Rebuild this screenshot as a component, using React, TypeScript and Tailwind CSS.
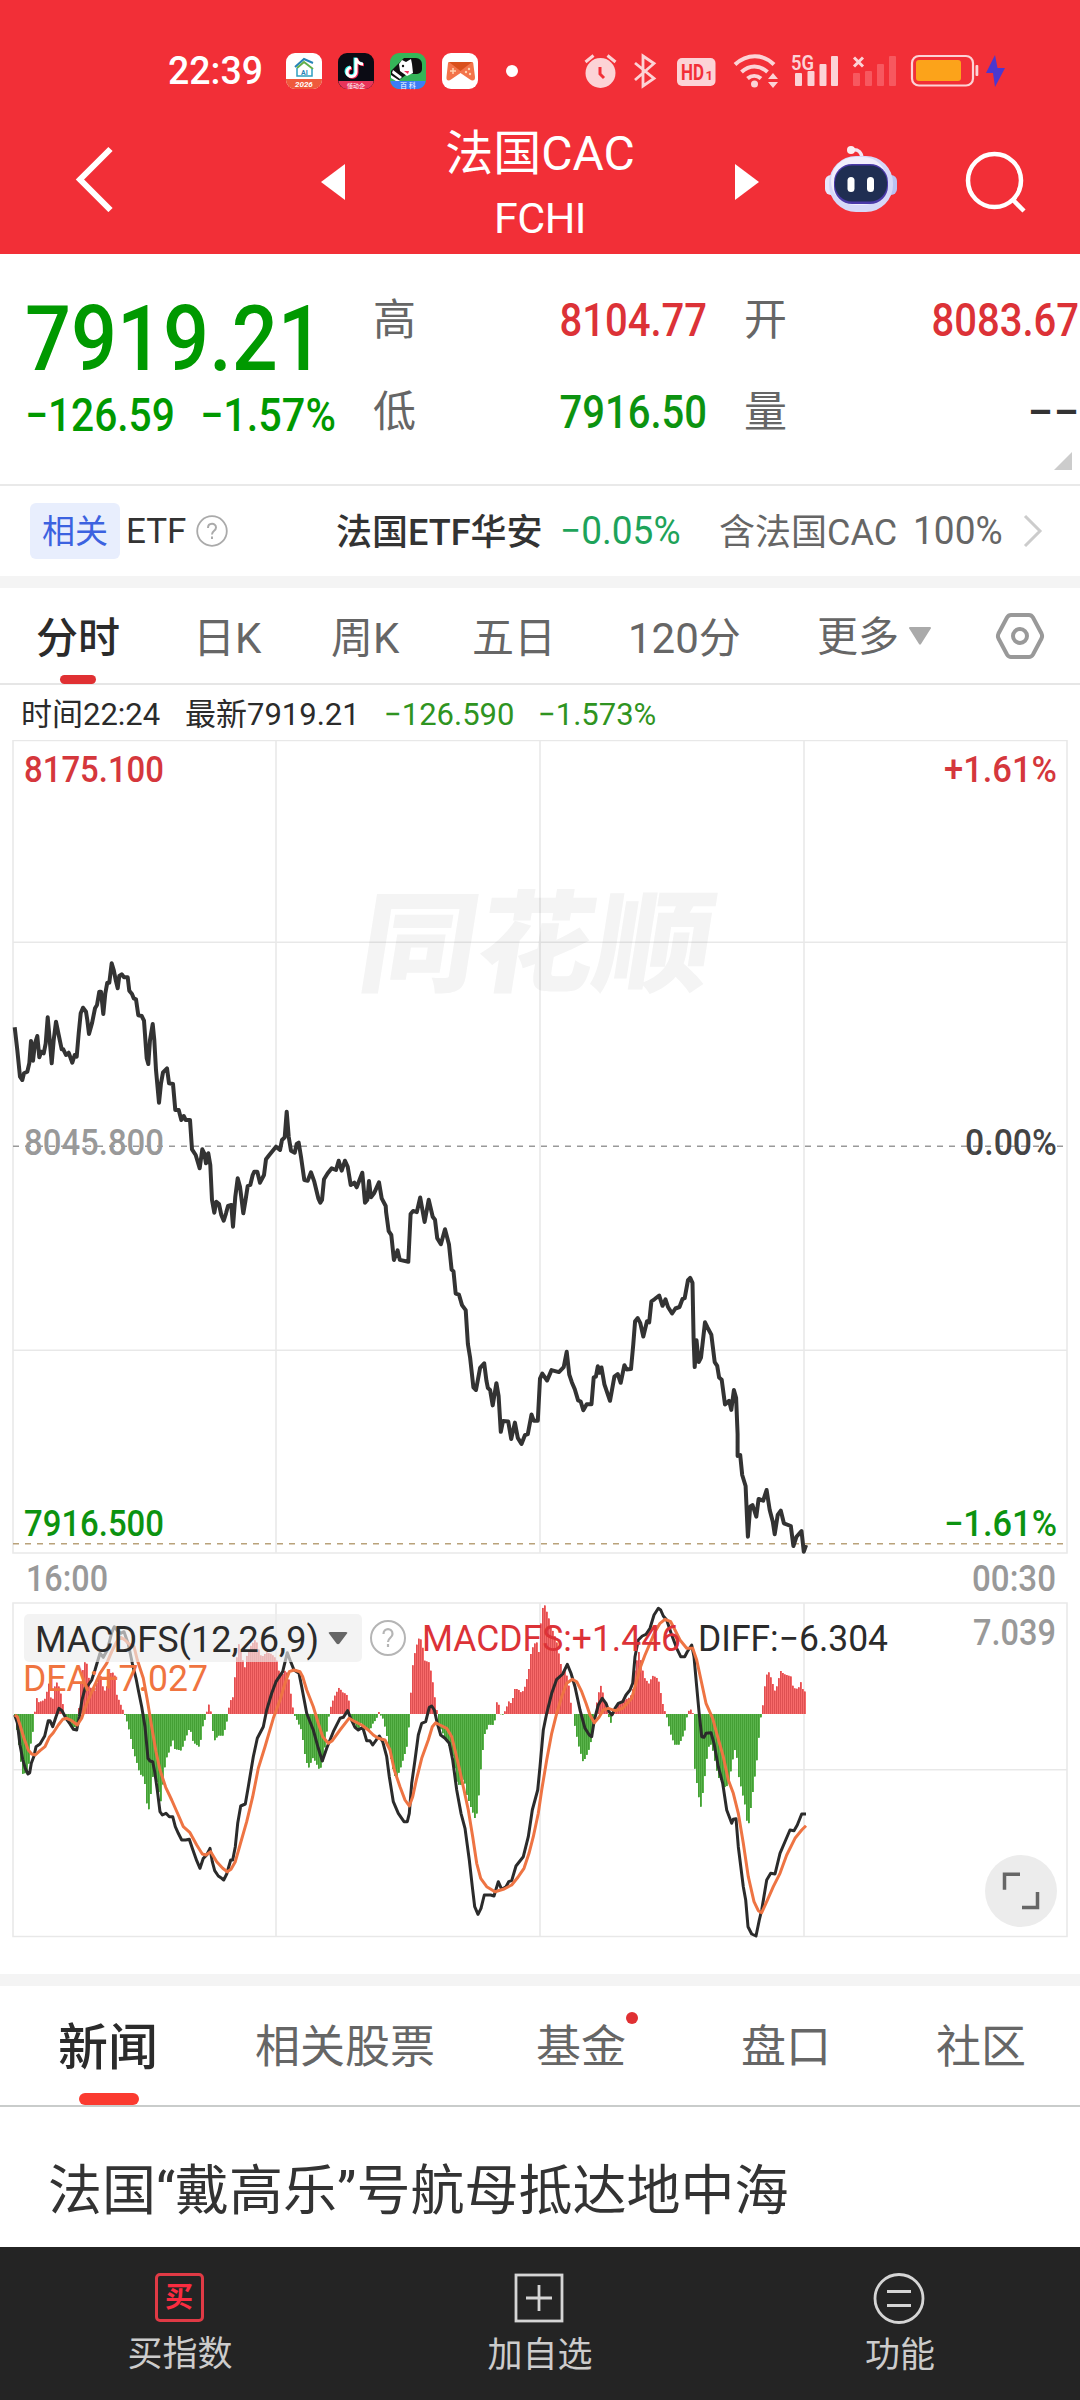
import type { ReactNode } from "react";

type Point = [number, number];

// turns "x,y x,y ..." into chart points, from a tile's own origin and scale
function trace(ox: number, oy: number, sx: number, sy: number, src: string): Point[] {
  return src
    .trim()
    .split(/\s+/)
    .map((p) => {
      const [x, y] = p.split(",").map(Number);
      return [ox + x / sx, oy + y / sy];
    });
}

const toPoints = (pts: Point[]) => pts.map(([x, y]) => `${x.toFixed(1)},${y.toFixed(1)}`).join(" ");

const price: Point[] = [
  ...trace(0, 740, 3, 3, `44,862 52,930 60,1010 67,1020 72,1000 82,995 88,970 93,903 99,962 105,910 112,888 118,952
    124,935 131,940 137,910 143,832 149,900 155,970 161,900 168,845 176,885 185,928 190,928 198,945 206,938 217,968
    224,945 230,950 236,880 242,820 249,803 258,815 262,840 267,882 276,850 285,805 291,795 298,755 303,755 310,822
    316,760 322,728 328,728 335,670 341,690 347,720 353,745 358,708 365,703 372,712 383,712 388,752 396,762 401,775
    408,778 415,826 425,828 432,842 440,955 445,972 450,900 458,852 463,900 468,990 477,1088 483,1030 489,997 501,985
    507,1030 519,1032 526,1110 536,1110 544,1140 551,1128 557,1140 570,1140 576,1228 587,1245 599,1285 607,1228
    613,1240 618,1270 625,1240 631,1275 636,1380 643,1418 649,1385 657,1392 664,1425 671,1442 678,1420 684,1398
    694,1395 699,1460 706,1370 713,1315 720,1340 730,1420 736,1385 743,1338 751,1335 758,1305 763,1295 772,1295
    780,1328 792,1305 798,1258 808,1245 828,1220 840,1230 846,1200 854,1192 860,1115 866,1190 873,1232 884,1238
    890,1212 896,1208 903,1250 913,1320 923,1322 933,1297 943,1325 955,1375 961,1388 966,1380 972,1318 983,1300
    995,1285 1008,1290 1016,1262 1025,1292 1035,1262 1043,1280 1052,1335 1063,1328 1070,1342 1087,1298 1095,1388
    1102,1380 1107,1323 1113,1372 1122,1360 1137,1327 1145,1375 1157,1398`),
  ...trace(240, 860, 2.703, 2.613, `395,920 402,970 409,980 416,1045 426,1020 432,1045 455,1050 461,925 468,917
    478,920 487,882 499,946 510,888 521,932 527,940 533,988 543,1004 554,965 565,1005 572,1070 577,1075 583,1133
    592,1136 600,1163 610,1176 616,1265 622,1300 631,1378 638,1385 649,1327 660,1315 666,1360 670,1380 676,1385
    683,1425 693,1367 699,1400 705,1494 711,1466 725,1467 733,1513 743,1470 751,1510 761,1526 770,1503 778,1500
    788,1449 794,1465 805,1465 811,1355 817,1342 830,1360 842,1333 862,1338 875,1325 883,1285 890,1345 897,1365
    905,1383 914,1412 921,1415 928,1438 937,1422 950,1422 956,1352 962,1350 967,1323 972,1340 977,1326 985,1370
    1000,1413 1012,1350 1021,1343 1029,1366 1039,1320 1045,1331 1057,1330 1063,1265 1068,1205 1075,1197 1082,1210
    1090,1245 1100,1205 1106,1208 1112,1153 1120,1148 1133,1138 1142,1165 1150,1148 1157,1168 1168,1185 1177,1172
    1188,1168 1196,1147 1202,1145 1211,1098 1217,1092 1223,1105 1226,1250 1229,1325 1234,1255 1240,1312 1246,1300
    1257,1208 1264,1222 1274,1240 1283,1312 1290,1322 1295,1352 1302,1358 1311,1423 1322,1413 1328,1437 1335,1385
    1341,1405 1345,1500`),
  ...trace(480, 1200, 2.613, 3, `673,768 680,765 685,825 694,858 698,960 700,1010 706,920 712,915 722,950 728,897
    740,902 749,870 757,930 765,965 770,1003 778,945 786,932 794,970 812,978 819,1038 827,1010 840,993 846,1055 852,1035`),
];

const diff: Point[] = [
  ...trace(0, 1500, 3, 3, `44,645 52,668 60,735 68,778 76,805 84,822 89,818 94,790 102,768 108,740 120,732 134,708
    145,662 150,662 158,680 168,650 177,625 186,632 198,655 210,672 220,688 230,690 238,650 246,600 255,565 265,555
    275,540 285,510 300,460 310,472 322,450 335,398 343,380 352,392 362,400 372,395 385,432 397,490 408,535 415,570
    425,620 435,680 444,775 450,783 458,785 464,815 472,870 480,935 487,945 498,940 508,950 518,950 526,980 535,1000
    545,1020 557,1020 568,1018 577,1045 590,1082 600,1105 610,1075 620,1065 630,1045 637,1085 644,1112 655,1128
    665,1135 671,1140 680,1122 692,1080 698,1080 706,1040 713,970 722,918 736,912 745,860 760,770 772,715 790,680
    800,630 815,580 828,545 848,515 862,458 870,480 882,510 897,520 905,560 920,640 940,690 955,745 967,783 980,745
    1000,695 1020,655 1030,652 1043,632 1052,655 1065,682 1075,690 1088,682 1100,722 1110,722 1118,735 1130,718
    1138,708 1148,725 1160,770 1168,830 1180,905 1195,940 1212,965`),
  ...trace(400, 1580, 3, 3, `22,725 28,700 35,610 45,540 55,465 65,430 77,425 88,382 95,378 103,390 112,430 122,465
    135,475 148,490 158,540 170,630 183,700 195,745 208,840 217,920 224,980 234,1003 243,985 253,945 272,945 282,948
    295,905 305,928 318,920 326,905 335,902 348,858 370,830 385,770 397,690 413,630 420,560 430,450 440,400 455,340
    470,298 488,282 502,253 513,280 525,320 540,390 555,445 568,465 575,470 583,420 595,375 607,355 618,370 627,395
    636,405 645,385 655,370 668,365 678,345 690,330 698,310 705,230 715,180 727,168 738,163 750,145 762,105 775,85
    782,90 790,108 800,120 815,165 830,205 842,230 854,230 862,215 875,195 882,230 890,320 897,395 905,470 912,472
    918,460 933,458 942,490 955,560 968,610 980,690 995,730 1000,718 1008,716 1015,800 1030,920 1037,960 1044,1040
    1055,1062 1068,1068 1078,1020 1085,990 1100,900 1112,880 1125,882 1140,820 1157,780 1170,750 1182,752 1192,735
    1205,702 1218,702`),
];

const dea: Point[] = [
  ...trace(0, 1500, 3, 3, `44,645 52,650 60,675 72,715 85,750 95,762 106,765 120,752 135,740 148,712 160,698 175,675
    188,658 200,655 215,662 232,675 245,655 255,625 265,600 280,565 300,520 320,490 335,455 350,425 362,412 375,420
    390,435 402,440 412,480 430,535 442,600 455,680 468,755 480,810 497,862 515,900 535,945 550,980 570,998 590,1035
    607,1062 618,1065 632,1055 650,1085 668,1105 682,1115 693,1108 706,1085 720,1035 740,965 758,890 775,805 795,740
    820,655 840,600 855,550 868,515 882,510 900,515 908,530 920,570 940,620 955,670 968,710 985,730 997,722 1020,690
    1047,655 1065,665 1085,675 1105,690 1120,705 1135,715 1155,720 1170,750 1183,810 1200,860 1215,900`),
  ...trace(400, 1580, 3, 3, `28,678 38,650 50,595 65,535 85,480 97,440 107,428 120,435 140,445 155,470 165,510
    178,565 192,630 205,690 218,770 230,850 242,895 260,920 285,935 310,928 335,915 355,890 372,865 387,820 400,770
    415,700 425,630 440,540 455,460 470,400 485,350 500,310 517,298 530,305 545,335 558,370 570,405 583,428 597,412
    610,390 625,385 645,392 668,385 695,355 705,320 720,265 735,225 750,190 765,155 780,130 795,118 812,125 825,150
    840,180 860,205 878,205 890,240 905,310 918,370 938,415 950,460 970,530 985,600 1000,640 1015,700 1030,790
    1045,890 1062,965 1075,992 1085,998 1100,965 1120,920 1140,880 1160,825 1185,775 1205,750 1218,737`),
];

// histogram heights, positive is above the zero line
const histogram: Point[] = [
  ...trace(0, 0, 3, 3, `44,-5 50,-40 60,-115 67,-180 85,-175 90,-110 97,-60 103,-40 104,0 107,20 110,50 116,35 134,42
    142,70 148,95 152,50 160,45 166,90 172,95 180,75 188,38 192,5 196,-5 205,-25 215,-40 222,-45 230,-30 236,0 240,70
    246,120 255,155 262,150 268,100 275,70 285,70 300,130 308,85 315,70 322,85 335,130 345,115 350,60 358,40 368,15
    374,0 378,-10 388,-50 400,-110 412,-150 420,-180 433,-190 440,-260 445,-300 452,-250 458,-190 465,-180 475,-220
    482,-270 488,-220 495,-160 502,-125 510,-110 518,-75 525,-105 545,-110 555,-80 570,-40 580,-85 600,-100 608,-40
    618,-8 620,0 623,20 628,30 632,15 634,0 638,-45 644,-80 655,-65 670,-65 680,-30 684,0 688,25 694,45 698,40
    704,100 712,180 718,215 725,175 735,140 742,180 750,200 760,215 768,225 778,190 785,170 800,185 815,180 830,165
    838,125 850,120 858,135 868,100 875,45 882,0 890,-15 905,-50 915,-120 925,-165 940,-130 950,-150 960,-170
    970,-140 980,-60 988,0 995,30 1005,55 1018,80 1028,65 1040,60 1047,40 1052,-10 1070,-40 1080,-45 1086,-10
    1090,-45 1110,-50 1118,-30 1130,-15 1136,8 1140,0 1150,-15 1160,-60 1170,-120 1180,-170 1188,-195 1200,-170
    1215,-120 1226,-80`),
  ...trace(400, 0, 3, 3, `28,0 32,50 40,160 50,205 60,235 68,205 75,160 88,155 97,110 107,35 113,0 115,-30 130,-60
    145,-90 160,-130 172,-210 182,-215 192,-190 200,-240 215,-285 228,-320 235,-270 245,-140 255,-60 268,-30 278,-35
    288,-12 290,30 294,50 298,20 300,0 310,-2 316,10 328,40 335,30 345,75 355,75 362,65 372,70 385,120 393,180
    402,210 412,215 418,180 424,290 432,335 440,310 455,260 470,220 480,165 488,125 498,130 508,80 515,15 519,0
    524,-30 535,-90 550,-145 560,-125 572,-95 578,-30 585,0 592,40 598,70 605,90 612,45 622,20 628,-15 632,-30
    638,-8 642,12 655,30 670,40 690,50 698,65 706,140 718,190 725,150 733,110 748,90 757,115 770,110 778,95 785,50
    792,15 799,0 803,-20 815,-70 825,-92 838,-92 850,-65 858,-40 862,0 870,15 878,10 880,-5 883,-150 890,-200
    902,-285 910,-230 918,-160 925,-100 935,-90 945,-140 955,-190 965,-200 978,-225 990,-190 1000,-130 1008,-95
    1015,-180 1028,-240 1037,-280 1044,-350 1052,-290 1062,-210 1070,-150 1078,-60 1084,0 1088,15 1093,70 1100,115
    1105,130 1113,110 1125,70 1132,85 1142,130 1152,120 1175,112 1180,78 1195,75 1204,98 1210,70 1218,66`),
];

function heightAt(x: number) {
  for (let i = 1; i < histogram.length; i++) {
    const [x0, h0] = histogram[i - 1];
    const [x1, h1] = histogram[i];
    if (x <= x1) return h0 + ((h1 - h0) * (x - x0)) / (x1 - x0);
  }
  return 0;
}

const ZERO = 1714;
const bars = Array.from({ length: 396 }, (_, i) => 14 + i * 2);

function StatusBar() {
  return (
    <svg className="block h-[110px] w-full" viewBox="0 0 1080 110">
      <text x="168" y="84" fontSize="38" fontWeight="500" fill="#fff" textLength="95" lengthAdjust="spacingAndGlyphs">22:39</text>

      <g>
        <rect x="286" y="53" width="36" height="36" rx="9" fill="#fff" />
        <path d="M286 79h36v1a9 9 0 0 1-9 9h-18a9 9 0 0 1-9-9z" fill="#ef5a3c" />
        <path d="M295 67l9-8 9 4" fill="none" stroke="#2684b8" strokeWidth="2" />
        <path d="M297 68l7-6 9 7" fill="none" stroke="#62b04a" strokeWidth="2" />
        <path d="M297 68v8h15v-7" fill="none" stroke="#2e9fc0" strokeWidth="1.5" />
        <text x="301" y="75" fontSize="7" fontWeight="700" fill="#2684b8">AI</text>
        <text x="295" y="87" fontSize="8" fontWeight="700" fontStyle="italic" fill="#fff">2026</text>
      </g>
      <g>
        <rect x="338" y="53" width="36" height="36" rx="9" fill="#0b0b14" />
        <path d="M338.500 81h35c0 4-4 8-8.500 8h-18c-4.500 0-8-4-8.500-8z" fill="#e8345a" />
        <g fill="none" strokeWidth="3">
          <path d="M356 58v14a4.500 4.500 0 1 1-5-4.500M356 58c.5 3 3 6 7 6" stroke="#25f4ee" transform="translate(-1 -.6)" />
          <path d="M356 58v14a4.500 4.500 0 1 1-5-4.500M356 58c.5 3 3 6 7 6" stroke="#fe2c55" transform="translate(1 .8)" />
          <path d="M356 58v14a4.500 4.500 0 1 1-5-4.500M356 58c.5 3 3 6 7 6" stroke="#fff" />
        </g>
        <text x="347" y="87.500" fontSize="6" fill="#fff">懂动企</text>
      </g>
      <g>
        <rect x="390" y="53" width="36" height="36" rx="9" fill="#35b558" />
        <path d="M404 58h12a6 6 0 0 1 6 6v5a5 5 0 0 1-5 5h-10l-9 7-7-4v-6l8-8z" fill="#111" />
        <path d="M399 64l3-4 4 2 5-3 1 5 1 9-6 3-7-5zM391 75l9 6h-4l-5-3zM393 70l9 7-2 2-8-6z" fill="#fff" />
        <circle cx="403" cy="66" r="1.200" fill="#111" />
        <path d="M404 71l5 0-1 3z" fill="#e8345a" />
        <path d="M390.500 81h35c0 4-4 8-8.500 8h-18c-4.500 0-8-4-8.500-8z" fill="#3b7df5" />
        <text x="400" y="87.500" fontSize="7" fill="#fff">百 科</text>
      </g>
      <g>
        <rect x="442" y="53" width="36" height="36" rx="9" fill="#fff" />
        <path d="M449 62h23q1 0 1.200 1l1.800 14c.4 4-3 4-5 2.500l-9.500-6.500-9.500 6.500c-2 1.500-5 1.500-4.500-2.500l1.500-14q.2-1 1-1z" fill="#f3744a" />
        <path d="M449 62h23l-11.500 9z" fill="#d9501c" />
        <path d="M453 68v6M450 71h6" stroke="#ffd2b0" strokeWidth="1.500" />
        <circle cx="466" cy="72" r="1.200" fill="#ffd2b0" />
        <circle cx="470" cy="74" r="1.200" fill="#ffd2b0" />
        <circle cx="469" cy="69" r="1.200" fill="#ffd2b0" />
      </g>
      <circle cx="512" cy="71" r="6" fill="#fff" />

      <g fill="#fcd3d6">
        <circle cx="600.500" cy="73" r="15" />
        <path d="M585.500 62l8-6.500M615.500 62l-8-6.500" stroke="#fcd3d6" strokeWidth="3" />
        <path d="M600 67v7l4 4" fill="none" stroke="#f22f37" strokeWidth="3" />
        <path d="M635 63l19 15.500-11 7.500V56l11 7.500L635 80" fill="none" stroke="#fcd3d6" strokeWidth="2.800" />
        <rect x="677" y="58" width="38.500" height="28" rx="5" />
        <text x="681" y="80" fontSize="22" fontWeight="700" fill="#f22f37" textLength="23" lengthAdjust="spacingAndGlyphs">HD</text>
        <text x="705.500" y="80" fontSize="13" fontWeight="700" fill="#f22f37">1</text>
        <g fill="none" stroke="#fcd3d6" strokeWidth="4">
          <path d="M735 64.500c12-11 28-11 39 0" />
          <path d="M741.500 72c8-7.500 18-7.500 26 0" />
          <path d="M747.500 78.500c4-3.500 9.500-3.500 13.500 0" />
        </g>
        <circle cx="754.500" cy="84" r="3.500" />
        <path d="M768 79l5-6 5 6zM768 82l5 6 5-6z" />
        <text x="791" y="70" fontSize="21" fontWeight="600" textLength="23" lengthAdjust="spacingAndGlyphs">5G</text>
        <rect x="795" y="73" width="7" height="13" rx="1" />
        <rect x="807.500" y="71" width="7" height="15" rx="1" />
        <rect x="819.500" y="64" width="7" height="22" rx="1" />
        <rect x="831" y="56" width="7" height="30" rx="1" />
        <path d="M854 57.500l9 9M863 57.500l-9 9" stroke="#fcd3d6" strokeWidth="3" />
        <g fill="#f7585f">
          <rect x="853" y="73" width="7" height="13" rx="1" />
          <rect x="865" y="71" width="7" height="15" rx="1" />
          <rect x="877" y="64" width="7" height="22" rx="1" />
          <rect x="889" y="56" width="7" height="30" rx="1" />
        </g>
        <rect x="912" y="56" width="61" height="29.500" rx="7" fill="none" stroke="#fcd3d6" strokeWidth="2.200" />
        <rect x="975.500" y="65" width="2.800" height="11" rx="1" />
      </g>
      <rect x="916" y="60" width="45" height="21" rx="3" fill="#fca31a" />
      <path d="M995 55l-9 18h7l2 14 10-19h-7.500z" fill="#4b38d0" />
    </svg>
  );
}

function RobotIcon() {
  return (
    <svg className="h-[68px] w-[72px]" viewBox="0 0 72 68">
      <path d="M27 5c6-1 10 2 10 9" fill="none" stroke="#f3e6f3" strokeWidth="3.500" />
      <circle cx="26" cy="5" r="4" fill="#fbeef2" />
      <rect x="0" y="30" width="12" height="20" rx="6" fill="#e9e6fb" />
      <rect x="60" y="30" width="12" height="20" rx="6" fill="#b9c2f3" />
      <rect x="4" y="11" width="64" height="56" rx="27" fill="#d6d8f8" />
      <rect x="6" y="12" width="56" height="48" rx="24" fill="#f1eefc" />
      <rect x="9" y="19" width="54" height="40" rx="18" fill="#4a39a8" />
      <rect x="10" y="20.500" width="52" height="36" rx="17" fill="#1f2e52" />
      <rect x="22.500" y="32" width="7" height="15" rx="3.500" fill="#fff" />
      <rect x="42" y="32" width="7" height="15" rx="3.500" fill="#fff" />
    </svg>
  );
}

function TitleBar() {
  return (
    <div className="flex h-[144px] items-start text-white">
      <svg className="ml-[74px] mt-[36px] h-[66px] w-[42px]" viewBox="0 0 42 66" fill="none" stroke="#fff" strokeWidth="6">
        <path d="M36.500 3L6 33.500 36.500 64" />
      </svg>
      <svg className="ml-[205px] mt-[54px] h-[36px] w-[24px]" viewBox="0 0 24 36">
        <path d="M24 0v36L0 18z" fill="#fff" />
      </svg>
      <div className="mt-[16px] flex w-[390px] flex-col items-center">
        <div className="text-[48px] leading-[56px]">法国CAC</div>
        <div className="mt-[6px] text-[43px] leading-[60px] tracking-[-0.5px]">FCHI</div>
      </div>
      <svg className="mt-[54px] h-[36px] w-[24px]" viewBox="0 0 24 36">
        <path d="M0 0v36l24-18z" fill="#fff" />
      </svg>
      <div className="ml-[66px] mt-[35px]">
        <RobotIcon />
      </div>
      <svg className="ml-[66px] mt-[40px] h-[64px] w-[66px]" viewBox="0 0 66 64" fill="none" stroke="#fff" strokeWidth="4.500">
        <circle cx="31.500" cy="30.500" r="26.500" />
        <path d="M50 50l11 11" />
      </svg>
    </div>
  );
}

function Quote() {
  return (
    <section className="relative flex h-[232px] border-b-2 border-[#e9e9e9]">
      <div className="w-[373px] shrink-0 pl-[25px] pt-[42px] text-[#009900]">
        <div className="h-[88px] origin-left scale-x-[0.9] whitespace-nowrap text-[90px] font-medium leading-[88px]">7919.21</div>
        <div className="mt-[3px] flex text-[46px] font-medium leading-[56px]">
          <div className="w-[175px] origin-left scale-x-[0.885] whitespace-nowrap">−126.59</div>
          <div className="origin-left scale-x-[0.9] whitespace-nowrap">−1.57%</div>
        </div>
      </div>
      <div className="grid h-[192px] shrink-0 grid-cols-[44px_290px_82px_290px] pt-[20px] text-[43px] leading-[92px] text-[#666]">
        <span>高</span>
        <span className="origin-right scale-x-[0.87] text-right text-[46px] font-medium text-[#dc3237]">8104.77</span>
        <span className="ml-[37px]">开</span>
        <span className="origin-right scale-x-[0.87] text-right text-[46px] font-medium text-[#dc3237]">8083.67</span>
        <span>低</span>
        <span className="origin-right scale-x-[0.87] text-right text-[46px] font-medium text-[#0c9310]">7916.50</span>
        <span className="ml-[37px]">量</span>
        <span className="text-right text-[46px] font-medium text-[#333]">−−</span>
      </div>
      <svg className="absolute bottom-[14px] right-[8px] h-[18px] w-[18px]" viewBox="0 0 18 18">
        <path d="M18 0v18H0z" fill="#ccc" />
      </svg>
    </section>
  );
}

function HelpIcon({ className }: { className: string }) {
  return (
    <svg className={className} viewBox="0 0 32 32" fill="none" stroke="#aaa">
      <circle cx="16" cy="16" r="14.800" strokeWidth="1.800" />
      <path d="M12 13c0-5.500 8-5.500 8-.5 0 3.500-4 3-4 7M16 21.500v2.500" strokeWidth="2" />
    </svg>
  );
}

function EtfRow() {
  return (
    <section className="flex h-[90px] items-center text-[36px] text-[#333]">
      <span className="ml-[30px] h-[56px] w-[90px] rounded-md bg-[#e8eefd] pt-[2px] text-center text-[33px] leading-[54px] text-[#3c62e0]">
        相关
      </span>
      <span className="ml-[6px] w-[68px] pt-[3px] text-[35px]">ETF</span>
      <HelpIcon className="ml-[2px] h-[32px] w-[32px]" />
      <span className="ml-[108px] w-[224px] whitespace-nowrap pt-[3px] font-medium">法国ETF华安</span>
      <span className="w-[159px] origin-left scale-x-[0.95] text-[39px]  text-[#1ea35a]">−0.05%</span>
      <span className="w-[194px] whitespace-nowrap pt-[3px] text-[#666]">含法国CAC</span>
      <span className="w-[109px] origin-left scale-x-[0.95] text-[39px] text-[#666]">100%</span>
      <svg className="h-[34px] w-[22px]" viewBox="0 0 22 34" fill="none" stroke="#ccc" strokeWidth="3">
        <path d="M3 2l15 15L3 32" />
      </svg>
    </section>
  );
}

function PeriodTabs() {
  return (
    <nav className="relative flex h-[97px] items-center border-b-2 border-[#e6e6e6] text-[42px] text-[#666]">
      <span className="ml-[36px] w-[157px] pt-[5px] font-medium text-[#2b2b2b]">分时</span>
      <span className="w-[138px] pt-[5px]">日K</span>
      <span className="w-[141px] pt-[5px]">周K</span>
      <span className="w-[156px] pt-[5px]">五日</span>
      <span className="w-[189px] pt-[5px]">120分</span>
      <span className="w-[92px] pt-[5px] text-[41px]">更多</span>
      <svg className="h-[18px] w-[22px]" viewBox="0 0 22 18">
        <path d="M1 0h20a1 1 0 0 1 .8 1.600L12 17a1.200 1.200 0 0 1-2 0L.2 1.600A1 1 0 0 1 1 0z" fill="#aaa" />
      </svg>
      <svg className="ml-[64px] h-[48px] w-[50px]" viewBox="0 0 50 48" fill="none" stroke="#999" strokeWidth="4">
        <path d="M16 3h18q2.500 0 4 2.500l8.500 16q1.200 2.500 0 5l-8.500 16q-1.500 2.500-4 2.500H16q-2.500 0-4-2.500l-8.500-16q-1.200-2.500 0-5l8.500-16Q13.500 3 16 3z" />
        <circle cx="25" cy="24" r="7" />
      </svg>
      <i className="absolute bottom-[-1px] left-[60px] h-[9px] w-[36px] rounded-full bg-[#e03033]" />
    </nav>
  );
}

function TickRow() {
  return (
    <div className="flex h-[55px] items-center whitespace-nowrap pt-[6px] text-[31px] text-[#2b2b2b]">
      <span className="ml-[21px] w-[164px]">时间22:24</span>
      <span className="w-[199px]">最新7919.21</span>
      <span className="w-[154px] text-[#2f9421]">−126.590</span>
      <span className="text-[#2f9421]">−1.573%</span>
    </div>
  );
}

function Label({ x, y, w, fill, weight = 500, children }: { x: number; y: number; w: number; fill: string; weight?: number; children: ReactNode }) {
  return (
    <text x={x} y={y} fontSize="36" fontWeight={weight} fill={fill} textLength={w} lengthAdjust="spacingAndGlyphs">
      {children}
    </text>
  );
}

function Charts() {
  return (
    <svg className="block h-[1234px] w-full" viewBox="0 740 1080 1234">
      <text
        x="0"
        y="0"
        fontSize="110"
        fontWeight="900"
        fill="#f4f4f4"
        textLength="352"
        lengthAdjust="spacingAndGlyphs"
        transform="translate(355 983) skewX(-9)"
      >
        同花顺
      </text>

      <g fill="none" stroke="#000" strokeOpacity="0.09" strokeWidth="1.600">
        <path d="M13 740.500h1054V1553H13zM276 740.500V1553M540 740.500V1553M804 740.500V1553M13 942.300h1054M13 1350.300h1054" />
        <path d="M13 1603h1054v333.500H13zM276 1603v333.500M540 1603v333.500M804 1603v333.500M13 1769.800h1054" />
      </g>
      <path d="M13 1146.300h1054" stroke="#999" strokeWidth="1.600" strokeDasharray="6 6" />
      <path d="M13 1543.700h1054" stroke="#b9a27a" strokeWidth="1.600" strokeDasharray="6 6" />

      <polyline points={toPoints(price)} fill="none" stroke="#333" strokeWidth="4" strokeLinejoin="round" />

      <Label x={24} y={782} w={140} fill="#d5373c">8175.100</Label>
      <Label x={944} y={782} w={113} fill="#d5373c">+1.61%</Label>
      <Label x={24} y={1155} w={140} fill="#999">8045.800</Label>
      <Label x={965} y={1155} w={92} fill="#444">0.00%</Label>
      <Label x={24} y={1536} w={140} fill="#0c9310">7916.500</Label>
      <Label x={944} y={1536} w={113} fill="#0c9310">−1.61%</Label>
      <Label x={26} y={1591} w={82} fill="#999">16:00</Label>
      <Label x={972} y={1591} w={84} fill="#999">00:30</Label>
      <Label x={973} y={1645} w={83} fill="#999">7.039</Label>

      {bars.map((x) => {
        const h = heightAt(x + 1);
        const color = h > 0 ? "#f76a6a" : "#5ab44c";
        const seam = h > 0 ? "#d84a4d" : "#3f9a30";
        const top = h > 0 ? ZERO - h : ZERO;
        return (
          <g key={x}>
            <rect x={x} y={top} width="2" height={Math.abs(h)} fill={color} />
            <rect x={x} y={top} width="0.800" height={Math.abs(h)} fill={seam} />
          </g>
        );
      })}
      <polyline points={toPoints(diff)} fill="none" stroke="#2b2b2b" strokeWidth="3" strokeLinejoin="round" />
      <polyline points={toPoints(dea)} fill="none" stroke="#ee7443" strokeWidth="3" strokeLinejoin="round" />

      <rect x="24" y="1614" width="338" height="48" rx="5" fill="#ececec" fillOpacity="0.65" />
      <Label x={35} y={1652} w={284} weight={400} fill="#2b2b2b">MACDFS(12,26,9)</Label>
      <path d="M330 1632h16q2 0 1 1.600l-7.500 10q-1.500 1.500-3 0l-7.500-10q-1-1.600 1-1.600z" fill="#666" />
      <g fill="none" stroke="#b5b5b5">
        <circle cx="388" cy="1638" r="17" strokeWidth="2" />
        <path d="M383.500 1634c0-6.500 9-6.500 9 0 0 4-4.500 3.500-4.500 8M388 1644v3" strokeWidth="2.200" />
      </g>
      <Label x={422} y={1651} w={259} weight={400} fill="#dc3237">MACDFS:+1.446</Label>
      <Label x={698} y={1651} w={190} weight={400} fill="#2b2b2b">DIFF:−6.304</Label>
      <Label x={23} y={1691} w={185} weight={400} fill="#f07440">DEA:+7.027</Label>

      <circle cx="1021" cy="1891" r="36" fill="#ececec" />
      <path d="M1020 1874.300h-15.500v15.500M1022 1907.500h15.500V1892" fill="none" stroke="#666" strokeWidth="3.500" />
    </svg>
  );
}

function NewsTabs() {
  return (
    <nav className="relative flex h-[121px] items-center border-b-2 border-[#c9cccb] text-[45px] text-[#666]">
      <span className="ml-[58px] w-[197px] pt-[6px] text-[50px] font-medium text-[#2b2b2b]">新闻</span>
      <span className="w-[281px] pt-[5px]">相关股票</span>
      <span className="relative w-[205px] pt-[5px]">
        基金
        <i className="absolute left-[90px] top-[3px] h-[12px] w-[12px] rounded-full bg-[#e03033]" />
      </span>
      <span className="w-[195px] pt-[5px]">盘口</span>
      <span className="pt-[5px]">社区</span>
      <i className="absolute bottom-0 left-[79px] h-[12px] w-[60px] rounded-full bg-[#fb3b30]" />
    </nav>
  );
}

function BottomBar() {
  return (
    <footer className="grid h-[153px] grid-cols-3 bg-[#242424] pt-[26px] text-[35px] leading-[50px] text-[#ccc]">
      <div className="flex flex-col items-center">
        <span className="mr-[2px] flex h-[49px] w-[49px] items-center justify-center rounded-[5px] border-[3px] border-[#e03a45] text-[28px] font-bold text-[#fb2c40]">
          买
        </span>
        <span className="mt-[8px]">买指数</span>
      </div>
      <div className="flex flex-col items-center">
        <svg className="mr-[2px] h-[50px] w-[50px]" viewBox="0 0 50 50" fill="none" stroke="#d5d5d5" strokeWidth="2.800">
          <rect x="2" y="2" width="46" height="46" />
          <path d="M25 12v26M12 25h26" />
        </svg>
        <span className="mt-[8px]">加自选</span>
      </div>
      <div className="flex flex-col items-center">
        <svg className="mr-[2px] h-[52px] w-[52px]" viewBox="0 0 52 52" fill="none" stroke="#d5d5d5" strokeWidth="2.800">
          <circle cx="26" cy="25.500" r="24" />
          <path d="M14 18.500h24M14 32.500h24" />
        </svg>
        <span className="mt-[6px]">功能</span>
      </div>
    </footer>
  );
}

export default function App() {
  return (
    <div className="flex h-[2400px] w-[1080px] flex-col overflow-hidden bg-white font-['Roboto','Noto_Sans_CJK_SC',sans-serif]">
      <header className="h-[254px] bg-[#f22f37]">
        <StatusBar />
        <TitleBar />
      </header>
      <Quote />
      <EtfRow />
      <div className="h-[12px] shrink-0 bg-[#f4f4f4]" />
      <PeriodTabs />
      <TickRow />
      <Charts />
      <div className="h-[12px] shrink-0 bg-[#f4f4f4]" />
      <NewsTabs />
      <article className="flex h-[140px] items-center pl-[48px] pt-[30px] text-[54px] leading-[70px] text-[#333]">
        法国“戴高乐”号航母抵达地中海
      </article>
      <BottomBar />
    </div>
  );
}
